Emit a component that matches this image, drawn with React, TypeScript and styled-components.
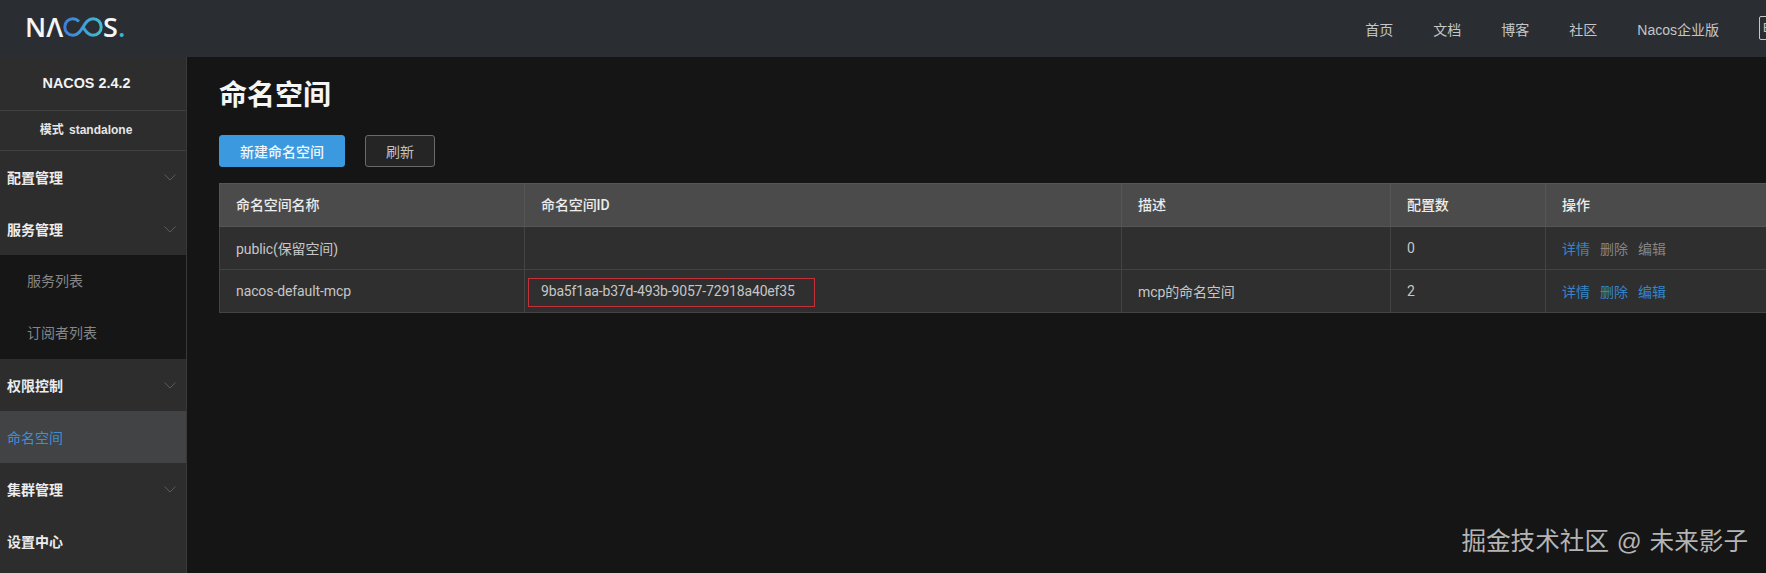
import { createGlobalStyle } from 'styled-components';
import styled from 'styled-components';

const GlobalStyle = createGlobalStyle`
  html, body {
    margin: 0;
    height: 100%;
    overflow: hidden;
    background: #151515;
    font-family: 'Liberation Sans', 'Noto Sans CJK SC', sans-serif;
    font-size: 14px;
  }
  * {
    box-sizing: border-box;
  }
`;

const Page = styled.div`
  position: relative;
  display: flex;
  flex-direction: column;
  width: 1766px;
  height: 573px;
  overflow: hidden;
`;

const Header = styled.header`
  display: flex;
  flex: 0 0 57px;
  align-items: center;
  justify-content: space-between;
  padding-left: 25px;
  background: #2a2e33;
`;

const Logo = styled.div`
  display: flex;
  align-items: center;
  margin-top: -3px;
  font-family: 'Open Sans', sans-serif;
  font-size: 27px;
  font-weight: 600;
  line-height: 22px;
  color: #f4f6f7;
`;

const LogoLetter = styled.span<{ $accent?: boolean }>`
  color: ${(props) => (props.$accent ? '#3fb4cf' : '#f4f6f7')};
`;

const Nav = styled.nav`
  display: flex;
  align-items: center;
  gap: 40px;
  margin-right: -25px;
  color: #c4c6c8;
`;

const NavLink = styled.span`
  font-size: 14px;
`;

const LangButton = styled.span`
  width: 32px;
  height: 24px;
  margin-top: -1px;
  padding-left: 3px;
  border: 1px solid #c4c6c8;
  border-radius: 2px;
  font-size: 12px;
  line-height: 22px;
  color: #c4c6c8;
`;

const Body = styled.div`
  display: flex;
  flex: 1;
  min-height: 0;
`;

const Sidebar = styled.aside`
  flex: 0 0 187px;
  border-right: 1px solid #393939;
  background: #2d2d2d;
`;

const Version = styled.div`
  height: 54px;
  padding-right: 13px;
  border-bottom: 1px solid #404040;
  font-size: 14.4px;
  font-weight: 700;
  line-height: 53px;
  text-align: center;
  color: #f2f2f2;
`;

const Mode = styled.div`
  height: 40px;
  padding-right: 14px;
  border-bottom: 1px solid #404040;
  font-size: 12px;
  font-weight: 700;
  line-height: 39px;
  text-align: center;
  word-spacing: 2px;
  color: #e6e6e6;
`;

const MenuItem = styled.div<{ $active?: boolean }>`
  display: flex;
  align-items: center;
  justify-content: space-between;
  height: 52px;
  padding: 0 10px 0 7px;
  font-weight: ${(props) => (props.$active ? 400 : 700)};
  color: ${(props) => (props.$active ? '#3c8fd6' : '#ececec')};
  background: ${(props) => (props.$active ? '#424344' : 'transparent')};
`;

const SubMenu = styled.div`
  background: #161616;
`;

const SubItem = styled.div`
  height: 52px;
  padding-left: 27px;
  line-height: 53px;
  color: #868686;
`;

const Main = styled.main`
  flex: 1;
  min-width: 0;
  padding-left: 32px;
  overflow: hidden;
`;

const Title = styled.h1`
  margin: 19px 0 0;
  font-size: 28px;
  font-weight: 700;
  line-height: 40px;
  color: #f5f5f5;
`;

const Toolbar = styled.div`
  display: flex;
  gap: 20px;
  margin-top: 19px;
`;

const Button = styled.button<{ $primary?: boolean }>`
  height: 32px;
  padding: 0 20px;
  border: 1px solid ${(props) => (props.$primary ? '#3b99e0' : '#6a6a6a')};
  border-radius: 3px;
  font-family: inherit;
  font-size: 14px;
  font-weight: ${(props) => (props.$primary ? 500 : 400)};
  color: ${(props) => (props.$primary ? '#f0f6fb' : '#c2c2c2')};
  background: ${(props) => (props.$primary ? '#3b99e0' : '#252525')};
`;

const Table = styled.table`
  width: 1640px;
  margin-top: 16px;
  border: 1px solid #474747;
  border-collapse: collapse;
  table-layout: fixed;
  font-family: 'Roboto', 'Noto Sans CJK SC', sans-serif;
  letter-spacing: -0.1px;
`;

const HeadCell = styled.th`
  height: 43px;
  padding: 0 16px 2px;
  border: 1px solid #565656;
  font-size: 14px;
  font-weight: 500;
  text-align: left;
  color: #ececec;
  background: #4b4b4b;
`;

const Cell = styled.td`
  height: 43px;
  padding: 0 16px;
  border: 1px solid #434343;
  font-size: 14px;
  color: #c6c6c6;
  background: #2f2f2f;
`;

const MarkedId = styled.span`
  position: relative;
  letter-spacing: -0.17px;

  &::after {
    content: '';
    position: absolute;
    top: -5px;
    left: -13px;
    width: 285px;
    height: 27px;
    border: 1px solid #c5303a;
  }
`;

const Action = styled.span<{ $muted?: boolean }>`
  margin-right: 10px;
  vertical-align: 1px;
  letter-spacing: 0;
  color: ${(props) => (props.$muted ? '#858585' : '#3485c9')};
`;

const Watermark = styled.div`
  position: absolute;
  right: 18px;
  bottom: 16px;
  font-size: 24.6px;
  line-height: 30px;
  white-space: pre;
  word-spacing: 1px;
  color: #b4b4b4;
`;

const Chevron = () => (
  <svg width="12" height="7" viewBox="0 0 12 7" fill="none">
    <path d="M0.5 0.5 L6 6 L11.5 0.5" stroke="#5a5a5a" strokeWidth="1" />
  </svg>
);

const InfinityMark = () => (
  <svg width="40" height="20" viewBox="0 0 40 20" fill="none">
    <defs>
      <linearGradient id="logo-loop" x1="0" y1="0" x2="1" y2="0">
        <stop offset="0" stopColor="#3d7fdc" />
        <stop offset="1" stopColor="#41bcd0" />
      </linearGradient>
    </defs>
    <path
      d="M16 4.5 C14 2.6 12 1.8 10 1.8 C5.2 1.8 1.8 5.2 1.8 10 C1.8 14.8 5.2 18.2 10 18.2 C15 18.2 17.5 14.2 20 10 C22.5 5.8 25 1.8 30 1.8 C34.8 1.8 38.2 5.2 38.2 10 C38.2 14.8 34.8 18.2 30 18.2 C25 18.2 22.5 14.2 20 10"
      stroke="url(#logo-loop)"
      strokeWidth="3"
    />
  </svg>
);

const menuBefore = ['配置管理', '服务管理'];
const subItems = ['服务列表', '订阅者列表'];
const navLinks = ['首页', '文档', '博客', '社区', 'Nacos企业版'];

const App = () => {
  return (
    <Page>
      <GlobalStyle />
      <Header>
        <Logo>
          <LogoLetter>NΛ</LogoLetter>
          <InfinityMark />
          <LogoLetter>S</LogoLetter>
          <LogoLetter $accent>.</LogoLetter>
        </Logo>
        <Nav>
          {navLinks.map((link) => (
            <NavLink key={link}>{link}</NavLink>
          ))}
          <LangButton>En</LangButton>
        </Nav>
      </Header>
      <Body>
        <Sidebar>
          <Version>NACOS 2.4.2</Version>
          <Mode>模式 standalone</Mode>
          {menuBefore.map((item) => (
            <MenuItem key={item}>
              {item}
              <Chevron />
            </MenuItem>
          ))}
          <SubMenu>
            {subItems.map((item) => (
              <SubItem key={item}>{item}</SubItem>
            ))}
          </SubMenu>
          <MenuItem>
            权限控制
            <Chevron />
          </MenuItem>
          <MenuItem $active>命名空间</MenuItem>
          <MenuItem>
            集群管理
            <Chevron />
          </MenuItem>
          <MenuItem>设置中心</MenuItem>
        </Sidebar>
        <Main>
          <Title>命名空间</Title>
          <Toolbar>
            <Button $primary>新建命名空间</Button>
            <Button>刷新</Button>
          </Toolbar>
          <Table>
            <colgroup>
              <col width="305" />
              <col width="597" />
              <col width="269" />
              <col width="155" />
              <col width="314" />
            </colgroup>
            <thead>
              <tr>
                <HeadCell>命名空间名称</HeadCell>
                <HeadCell>命名空间ID</HeadCell>
                <HeadCell>描述</HeadCell>
                <HeadCell>配置数</HeadCell>
                <HeadCell>操作</HeadCell>
              </tr>
            </thead>
            <tbody>
              <tr>
                <Cell>public(保留空间)</Cell>
                <Cell />
                <Cell />
                <Cell>0</Cell>
                <Cell>
                  <Action>详情</Action>
                  <Action $muted>删除</Action>
                  <Action $muted>编辑</Action>
                </Cell>
              </tr>
              <tr>
                <Cell>nacos-default-mcp</Cell>
                <Cell>
                  <MarkedId>9ba5f1aa-b37d-493b-9057-72918a40ef35</MarkedId>
                </Cell>
                <Cell>mcp的命名空间</Cell>
                <Cell>2</Cell>
                <Cell>
                  <Action>详情</Action>
                  <Action>删除</Action>
                  <Action>编辑</Action>
                </Cell>
              </tr>
            </tbody>
          </Table>
        </Main>
      </Body>
      <Watermark>掘金技术社区 @ 未来影子</Watermark>
    </Page>
  );
};

export default App;
